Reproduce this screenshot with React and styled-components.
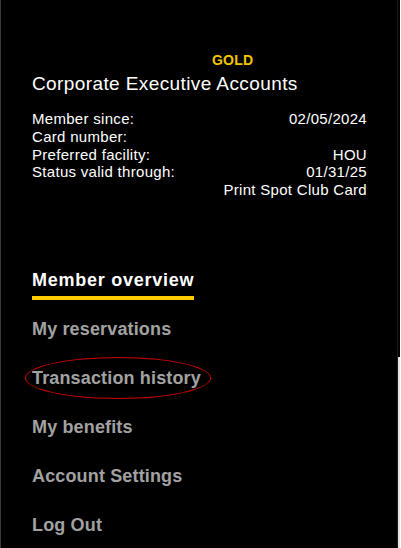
import { Fragment } from 'react';
import styled, { createGlobalStyle } from 'styled-components';

const GlobalStyle = createGlobalStyle`
    html, body {
        margin: 0;
        padding: 0;
        background: #000;
    }
    body {
        font-family: "Liberation Sans", Arial, sans-serif;
    }
`;

const Page = styled.div`
    display: flex;
    min-height: 548px;
`;

const Panel = styled.aside`
    box-sizing: border-box;
    width: 398px;
    min-height: 548px;
    background: #000;
    border-left: 1px solid #3a3a3a;
    border-right: 1px solid #1c1c1c;
    padding: 52px 30px 0 31px;
    color: #fff;
`;

const Gutter = styled.div`
    flex: 1;
    background: linear-gradient(#000 357px, #e4e4e4 357px);
    border-right: 1px solid #fff;
`;

const Tier = styled.div`
    padding-left: 180px;
    font-size: 14px;
    line-height: 16px;
    font-weight: 700;
    color: #f5c400;
    letter-spacing: 0.2px;
`;

const Title = styled.h1`
    margin: 5px 0 15px;
    font-size: 19px;
    line-height: 22px;
    font-weight: 400;
    letter-spacing: 0.4px;
`;

const Details = styled.dl`
    margin: 0;
    display: grid;
    grid-template-columns: 1fr auto;
    font-size: 15px;
    line-height: 17.75px;
    letter-spacing: 0.3px;
`;

const Term = styled.dt`
    margin: 0;
`;

const Value = styled.dd`
    margin: 0;
    text-align: right;
    grid-column: ${p => (p.$full ? '1 / -1' : 'auto')};
`;

const Nav = styled.nav`
    display: flex;
    flex-direction: column;
    align-items: flex-start;
    gap: 25px;
    margin-top: 69px;
`;

const NavItem = styled.a`
    position: relative;
    display: inline-block;
    font-size: 18px;
    line-height: 24px;
    font-weight: 700;
    letter-spacing: ${p => (p.$active ? '0.75px' : '0.15px')};
    color: ${p => (p.$active ? '#fff' : '#a2a2a2')};
    text-decoration: none;
    cursor: pointer;

    ${p => p.$active && `
        &::after {
            content: '';
            position: absolute;
            left: 0;
            right: 0;
            bottom: -8px;
            height: 4px;
            background: #ffcc00;
        }
    `}
`;

const Circled = styled.span`
    position: absolute;
    left: -7px;
    top: -9px;
    width: 186px;
    height: 42px;
    box-sizing: border-box;
    border: 1.3px solid #d00000;
    border-radius: 50%;
    pointer-events: none;
`;

const details = [
    ['Member since:', '02/05/2024'],
    ['Card number:', ''],
    ['Preferred facility:', 'HOU'],
    ['Status valid through:', '01/31/25'],
];

const links = [
    { label: 'Member overview', active: true },
    { label: 'My reservations' },
    { label: 'Transaction history', marked: true },
    { label: 'My benefits' },
    { label: 'Account Settings' },
    { label: 'Log Out' },
];

export default function App() {
    return (
        <>
            <GlobalStyle />
            <Page>
                <Panel>
                    <Tier>GOLD</Tier>
                    <Title>Corporate Executive Accounts</Title>
                    <Details>
                        {details.map(([term, value]) => (
                            <Fragment key={term}>
                                <Term>{term}</Term>
                                <Value>{value}</Value>
                            </Fragment>
                        ))}
                        <Value $full>Print Spot Club Card</Value>
                    </Details>
                    <Nav>
                        {links.map(link => (
                            <NavItem key={link.label} $active={link.active}>
                                {link.label}
                                {link.marked && <Circled />}
                            </NavItem>
                        ))}
                    </Nav>
                </Panel>
                <Gutter />
            </Page>
        </>
    );
}
